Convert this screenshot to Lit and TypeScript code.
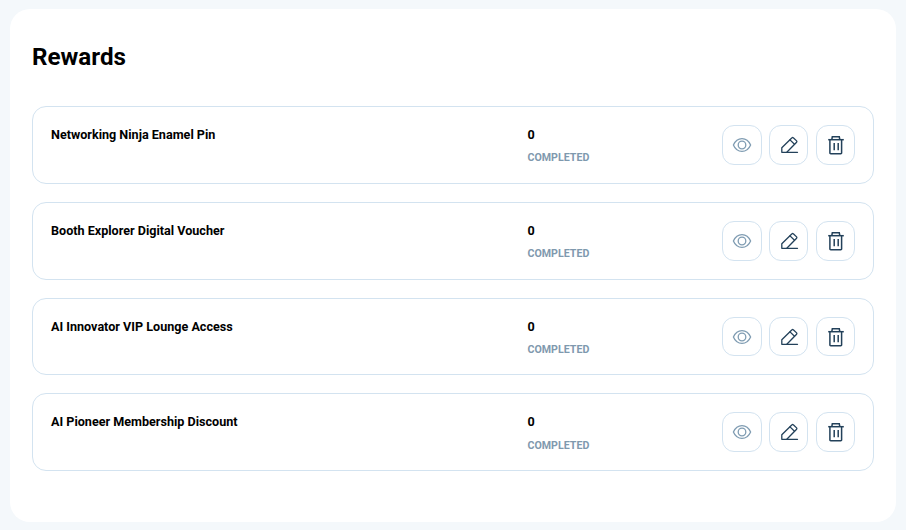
import { LitElement, html, css } from "lit";
import { customElement } from "lit/decorators.js";

const rewards = [
  "Networking Ninja Enamel Pin",
  "Booth Explorer Digital Voucher",
  "AI Innovator VIP Lounge Access",
  "AI Pioneer Membership Discount",
];

const eye = html`<svg width="20" height="20" viewBox="0 0 20 20" fill="none" stroke="#7f9cb2" stroke-width="1.300"><path d="M1.400 10C3.200 5.800 6.400 3.600 10 3.600s6.800 2.200 8.600 6.400c-1.800 4.200-5 6.400-8.600 6.400S3.200 14.200 1.400 10Z"/><circle cx="10" cy="10" r="3.800"/></svg>`;
const pen = html`<svg width="20" height="20" viewBox="0 0 20 20" fill="none" stroke="#23415a" stroke-width="1.300" stroke-linejoin="round" stroke-linecap="round"><path d="M2.800 17.300V12.700L13 2.800a.9.9 0 0 1 1.300 0l3.300 3.100a.9.9 0 0 1 0 1.300L7.800 17.300H2.800Z"/><path d="M11 4.900L15.500 9.200"/><path d="M7.800 17.300H18.500"/></svg>`;
const trash = html`<svg width="20" height="20" viewBox="0 0 20 20" fill="none" stroke="#23415a" stroke-width="1.500"><path d="M2.200 4.700H17.800"/><path d="M3.900 4.700V17.900a.8.8 0 0 0 .8.800h10.100a.8.8 0 0 0 .8-.8V4.700"/><path d="M5.800 4.700L6.300 1.800H13.300L13.800 4.700"/><path d="M8.200 8V15.300M12.200 8V15.300"/></svg>`;

@customElement("app-root")
export class AppRoot extends LitElement {
  static styles = css`
    :host {
      display: block;
      width: 906px;
      height: 530px;
      box-sizing: border-box;
      padding: 9px 10px 8px;
      background: #f4f8fb;
      font-family: Roboto, "Liberation Sans", sans-serif;
      color: #000;
    }
    .panel {
      height: 100%;
      box-sizing: border-box;
      background: #fff;
      border-radius: 20px;
      padding: 33px 22px 0;
    }
    h1 {
      margin: 0 0 34.3px;
      font-size: 24.2px;
      line-height: 30px;
      font-weight: 700;
    }
    .rows {
      display: flex;
      flex-direction: column;
      gap: 18px;
    }
    .row {
      display: grid;
      grid-template-columns: 476.5px 1fr auto;
      border: 1px solid #d3e3f0;
      border-radius: 14px;
      padding: 18px;
    }
    .name {
      font-size: 12.6px;
      line-height: 20px;
      font-weight: 700;
    }
    .stat {
      display: flex;
      flex-direction: column;
      gap: 6.2px;
    }
    .num {
      font-size: 12.6px;
      line-height: 20px;
      font-weight: 700;
    }
    .label {
      font-size: 10.65px;
      line-height: 13.53px;
      font-weight: 700;
      color: #7f99ae;
    }
    .actions {
      display: flex;
      gap: 7.6px;
    }
    .btn {
      width: 39px;
      height: 39.73px;
      box-sizing: border-box;
      display: flex;
      align-items: center;
      justify-content: center;
      border: 1px solid #d3e3f0;
      border-radius: 12px;
      background: #fff;
      padding: 0;
    }
    .btn.view {
      width: 40px;
    }
  `;

  render() {
    return html`<div class="panel">
      <h1>Rewards</h1>
      <div class="rows">
        ${rewards.map(
          (r) => html`<div class="row">
            <div class="name">${r}</div>
            <div class="stat">
              <div class="num">0</div>
              <div class="label">COMPLETED</div>
            </div>
            <div class="actions">
              <button class="btn view">${eye}</button>
              <button class="btn">${pen}</button>
              <button class="btn">${trash}</button>
            </div>
          </div>`
        )}
      </div>
    </div>`;
  }
}
